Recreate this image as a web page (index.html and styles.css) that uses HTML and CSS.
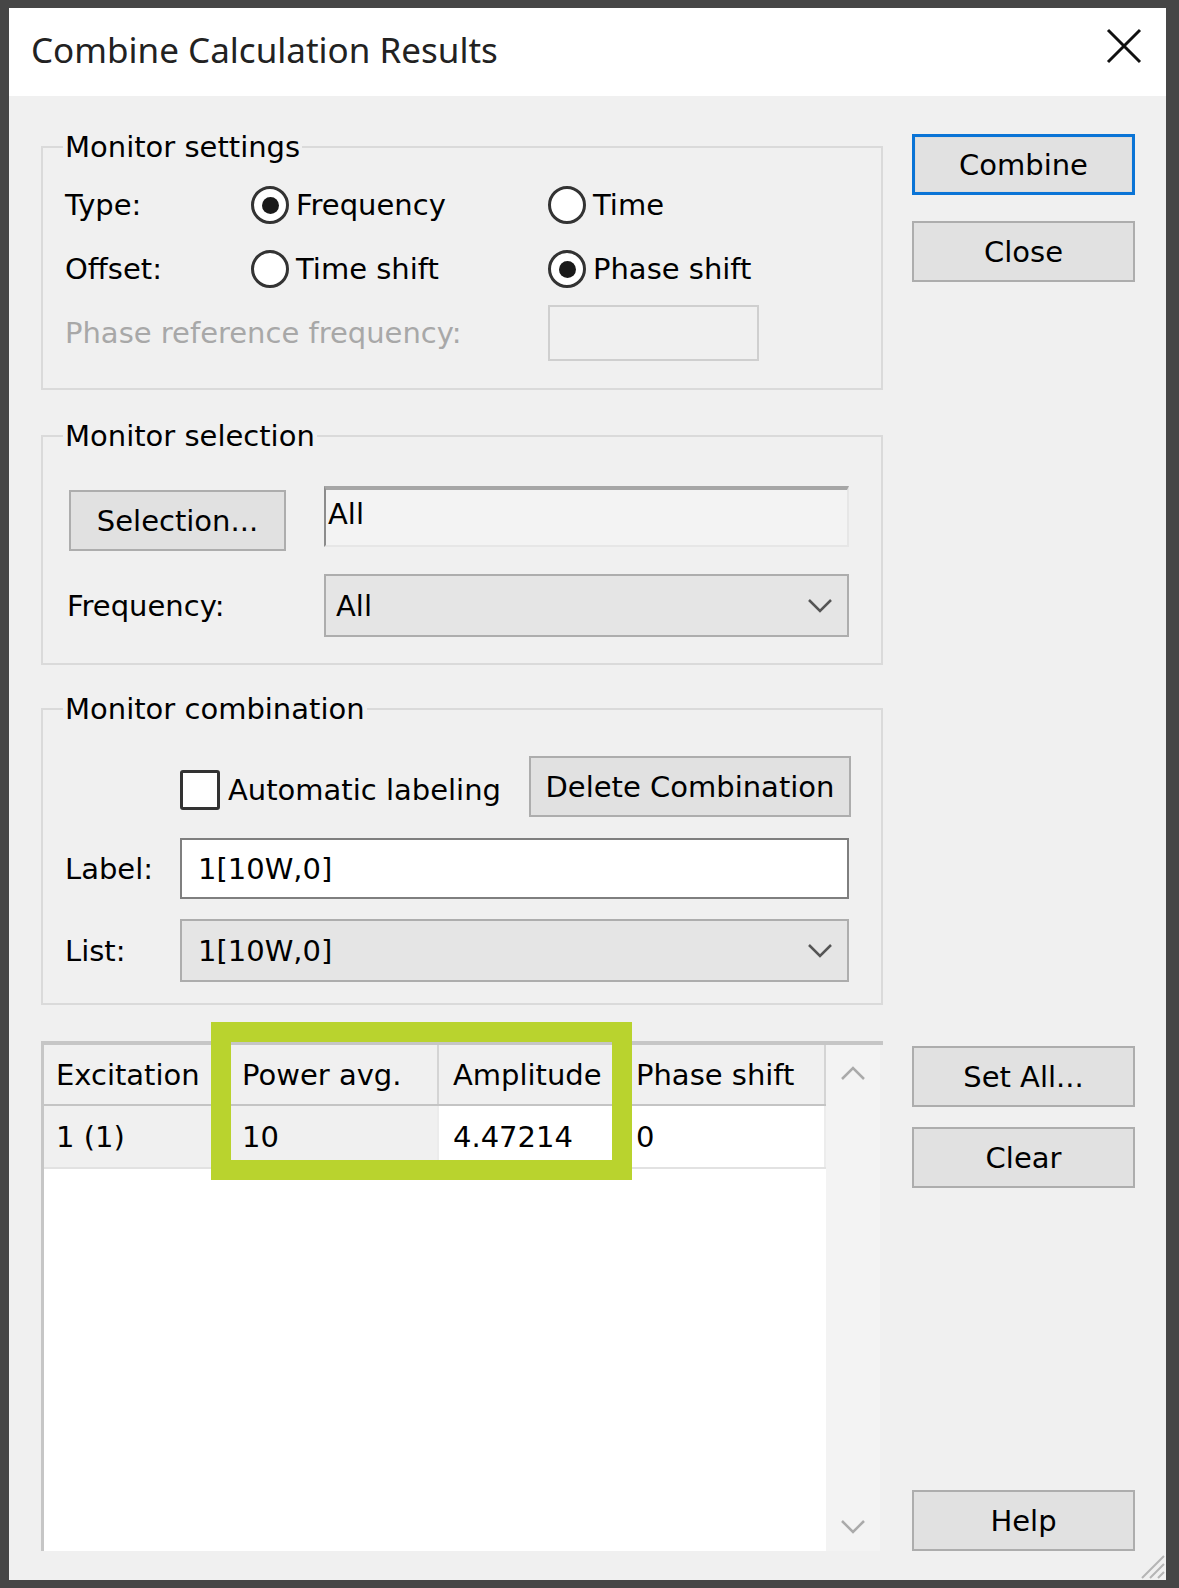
FILE: index.html
```html
<!DOCTYPE html>
<html lang="en">
<head>
  <meta charset="UTF-8" />
  <title>Combine Calculation Results</title>
  <link rel="stylesheet" href="styles.css">
</head>
<body>
  <div class="window">
    <div class="titlebar">
      <span class="title">Combine Calculation Results</span>
      <span class="close">
        <svg width="38" height="38" viewBox="0 0 38 38"><path d="M3 3 L35 35 M35 3 L3 35" stroke="#111" stroke-width="3" fill="none"/></svg>
      </span>
    </div>

    <div class="client">
      <div class="left">
        <fieldset class="group settings">
          <legend>Monitor settings</legend>
          <div class="settings-grid">
            <span class="lbl">Type:</span>
            <label class="radio"><span class="dot on"></span>Frequency</label>
            <label class="radio"><span class="dot"></span>Time</label>

            <span class="lbl">Offset:</span>
            <label class="radio"><span class="dot"></span>Time shift</label>
            <label class="radio"><span class="dot on"></span>Phase shift</label>

            <span class="lbl disabled span2">Phase reference frequency:</span>
            <span class="edit off"></span>
          </div>
        </fieldset>

        <fieldset class="group selection">
          <legend>Monitor selection</legend>
          <div class="sel-grid">
            <button class="btn sel-btn">Selection...</button>
            <span class="static">All</span>
            <span class="lbl">Frequency:</span>
            <span class="combo">All
              <svg class="chev" width="26" height="16" viewBox="0 0 26 16"><path d="M2 2 L13 13 L24 2" stroke="#555" stroke-width="2.5" fill="none"/></svg>
            </span>
          </div>
        </fieldset>

        <fieldset class="group combination">
          <legend>Monitor combination</legend>
          <div class="comb-grid">
            <div class="comb-top">
              <label class="check"><span class="box"></span>Automatic labeling</label>
              <button class="btn del-btn">Delete Combination</button>
            </div>
            <span class="lbl">Label:</span>
            <span class="edit full">1[10W,0]</span>
            <span class="lbl">List:</span>
            <span class="combo full">1[10W,0]
              <svg class="chev" width="26" height="16" viewBox="0 0 26 16"><path d="M2 2 L13 13 L24 2" stroke="#555" stroke-width="2.5" fill="none"/></svg>
            </span>
          </div>
        </fieldset>
      </div>

      <div class="side upper">
        <button class="btn default">Combine</button>
        <button class="btn">Close</button>
      </div>

      <div class="table-wrap">
        <div class="table">
          <div class="row head">
            <span class="cell c1">Excitation</span>
            <span class="cell c2">Power avg.</span>
            <span class="cell c3">Amplitude</span>
            <span class="cell c4">Phase shift</span>
          </div>
          <div class="row">
            <span class="cell c1 grey">1 (1)</span>
            <span class="cell c2 grey">10</span>
            <span class="cell c3">4.47214</span>
            <span class="cell c4">0</span>
          </div>
        </div>
        <div class="scroll">
          <svg width="26" height="16" viewBox="0 0 26 16"><path d="M2 14 L13 3 L24 14" stroke="#aaa" stroke-width="2.5" fill="none"/></svg>
          <svg width="26" height="16" viewBox="0 0 26 16"><path d="M2 2 L13 13 L24 2" stroke="#aaa" stroke-width="2.5" fill="none"/></svg>
        </div>
        <div class="highlight"></div>
      </div>

      <div class="side lower">
        <button class="btn">Set All...</button>
        <button class="btn">Clear</button>
        <button class="btn help">Help</button>
      </div>
    </div>

    <svg class="grip" width="30" height="30" viewBox="0 0 30 30">
      <path d="M28 6 L6 28 M28 14 L14 28 M28 22 L22 28" stroke="#b5b5b5" stroke-width="2"/>
    </svg>
  </div>
</body>
</html>
```

FILE: styles.css
```css
body {
  margin: 0;
  background: #464646;
  font-family: 'DejaVu Sans', sans-serif;
  font-size: 29px;
  color: #000;
}
.window {
  position: relative;
  margin: 8px 13px 8px 9px;
  height: 1572px;
  background: #f0f0f0;
  box-sizing: border-box;
}
.titlebar {
  height: 88px;
  background: #fff;
  display: flex;
  align-items: center;
  justify-content: space-between;
  padding: 0 23px 0 22px;
}
.title {
  font-family: 'Noto Sans', sans-serif;
  font-size: 35px;
  color: #222;
  margin-top: -6px;
}
.close {
  display: flex;
  margin-top: -12px;
}
.client {
  display: grid;
  grid-template-columns: 842px 223px;
  column-gap: 29px;
  padding: 33px 0 0 32px;
}
.left {
  display: flex;
  flex-direction: column;
}
.group {
  margin: 0;
  padding: 0 30px 0 22px;
  border: 2px solid #dadada;
  min-width: 0;
}
.group legend {
  padding: 0 2px;
  margin-left: -2px;
  line-height: 36px;
  height: 36px;
}
.lbl {
  display: flex;
  align-items: center;
}
.disabled {
  color: #a8a8a8;
}
.span2 {
  grid-column: span 2;
}

/* monitor settings */
.settings-grid {
  display: grid;
  grid-template-columns: 186px 297px 1fr;
  grid-auto-rows: 64px;
  padding: 8px 0 23px;
}
.radio {
  display: flex;
  align-items: center;
  gap: 7px;
}
.dot {
  width: 38px;
  height: 38px;
  box-sizing: border-box;
  border: 3px solid #333;
  border-radius: 50%;
  background: #fff;
  display: flex;
  align-items: center;
  justify-content: center;
}
.dot.on::after {
  content: '';
  width: 17px;
  height: 17px;
  border-radius: 50%;
  background: #1a1a1a;
}
.edit {
  box-sizing: border-box;
  height: 61px;
  border: 2px solid #7f7f7f;
  background: #fff;
  display: flex;
  align-items: center;
  padding-left: 14px;
}
.edit.off {
  width: 211px;
  height: 56px;
  align-self: center;
  border-color: #cfcfcf;
  background: #f0f0f0;
}

/* monitor selection */
.sel-grid {
  display: grid;
  grid-template-columns: 255px 525px;
  grid-template-rows: 65px 63px;
  row-gap: 23px;
  padding: 32px 0 26px 4px;
}
.sel-btn {
  width: 217px;
  height: 63px;
  align-self: end;
}
.static {
  box-sizing: border-box;
  height: 61px;
  border-top: 4px solid #a6a6a6;
  border-left: 2px solid #8c8c8c;
  border-right: 2px solid #e6e6e6;
  border-bottom: 2px solid #e6e6e6;
  background: #f3f3f3;
  padding: 0 2px;
  line-height: 48px;
}
.sel-grid .lbl {
  margin-left: -2px;
}
.combo {
  position: relative;
  box-sizing: border-box;
  height: 63px;
  border: 2px solid #adadad;
  background: #e5e5e5;
  display: flex;
  align-items: center;
  padding-left: 10px;
}
.chev {
  position: absolute;
  right: 14px;
  top: 22px;
}

/* monitor combination */
.comb-grid {
  display: grid;
  grid-template-columns: 115px 669px;
  grid-template-rows: 63px 61px 63px;
  row-gap: 20px;
  padding: 28px 0 21px;
}
.comb-top {
  grid-column: 2;
  display: flex;
  justify-content: space-between;
  align-items: center;
  margin-right: -2px;
}
.check {
  display: flex;
  align-items: center;
  gap: 8px;
  margin-top: 6px;
}
.box {
  width: 40px;
  height: 40px;
  box-sizing: border-box;
  border: 3px solid #333;
  border-radius: 3px;
  background: #fff;
}
.del-btn {
  width: 322px;
  height: 63px;
}
.full {
  padding-left: 16px;
}

.settings { margin-bottom: 28px; }
.selection { margin-bottom: 26px; }

/* buttons */
.btn {
  font: inherit;
  color: #000;
  box-sizing: border-box;
  background: #e1e1e1;
  border: 2px solid #adadad;
  padding: 0;
  height: 61px;
}
.side {
  display: flex;
  flex-direction: column;
}
.side .btn {
  width: 223px;
}
.upper {
  padding-top: 5px;
  gap: 26px;
}
.btn.default {
  border: 3px solid #0a74d6;
  box-shadow: inset 0 0 0 1px #dcdcdc;
}
.lower {
  margin-top: 36px;
  padding-top: 5px;
  gap: 20px;
}
.help {
  margin-top: auto;
}

/* results grid */
.table-wrap {
  position: relative;
  margin-top: 36px;
  height: 506px;
  display: flex;
  border-top: 4px solid #c6c6c6;
  border-left: 3px solid #c6c6c6;
  width: 839px;
}
.table {
  width: 782px;
  background: #fff;
}
.row {
  display: flex;
  height: 61px;
  border-bottom: 2px solid #e2e2e2;
}
.row.head {
  height: 59px;
  background: #f0f0f0;
  border-bottom: 2px solid #c4c4c4;
}
.cell {
  display: flex;
  align-items: center;
  padding-left: 12px;
  box-sizing: border-box;
  border-right: 2px solid #d4d4d4;
  white-space: nowrap;
}
.row:not(.head) .cell {
  border-right-color: #ececec;
}
.cell.grey {
  background: #f0f0f0;
}
.c1 { width: 182px; }
.c2 { width: 213px; padding-left: 16px; }
.c3 { width: 183px; padding-left: 14px; }
.c4 { width: 204px; padding-left: 14px; }
.scroll {
  width: 54px;
  background: #f3f3f3;
  display: flex;
  flex-direction: column;
  justify-content: space-between;
  align-items: center;
  padding: 20px 0 16px;
  box-sizing: border-box;
}
.highlight {
  position: absolute;
  left: 167px;
  top: -23px;
  width: 421px;
  height: 158px;
  box-sizing: border-box;
  border: 20px solid #b9d32e;
}
.grip {
  position: absolute;
  right: 0;
  bottom: 0;
}
```
